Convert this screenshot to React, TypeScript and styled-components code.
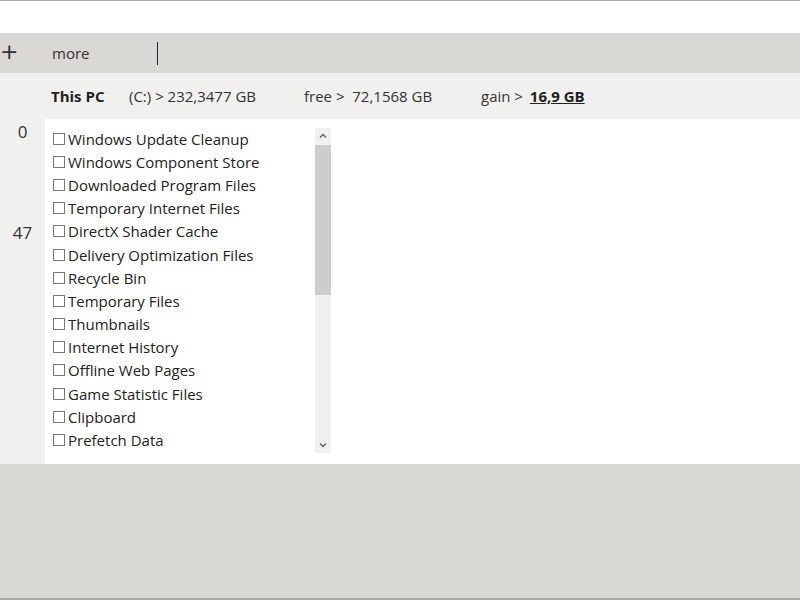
import styled, { createGlobalStyle } from "styled-components";

const GlobalStyle = createGlobalStyle`
  body {
    margin: 0;
    font-family: "Open Sans", "Noto Sans", sans-serif;
    color: #222;
  }
`;

const Frame = styled.div`
  height: 600px;
  display: flex;
  flex-direction: column;
  border-top: 1px solid #a8a8a8;
  border-bottom: 2px solid #a9a9a6;
  box-sizing: border-box;
  overflow: hidden;
`;

const TitleStrip = styled.div`
  height: 32px;
  background: #fff;
`;

const Toolbar = styled.div`
  height: 40px;
  background: #d9d8d4;
  display: flex;
  align-items: center;
  font-size: 15px;
  color: #333;
`;

const AddButton = styled.span`
  width: 52px;
  font-family: "DejaVu Sans", sans-serif;
  font-size: 22px;
  line-height: 1;
  padding-bottom: 2px;
  color: #333;
`;

const MoreLabel = styled.span`
  width: 105px;
`;

const Caret = styled.span`
  width: 1px;
  height: 23px;
  background: #222;
`;

const InfoRow = styled.div`
  height: 46px;
  background: #f0f0ef;
  display: flex;
  align-items: center;
  padding-left: 51px;
  font-size: 15px;
  color: #333;
`;

const InfoItem = styled.span<{ $w: number }>`
  width: ${(p) => p.$w}px;
  white-space: nowrap;
`;

const Strong = styled.b`
  font-weight: 700;
  color: #222;
`;

const Gain = styled.b`
  font-weight: 700;
  text-decoration: underline;
  color: #222;
  margin-left: 3px;
`;

const Main = styled.div`
  height: 345px;
  display: flex;
`;

const Gutter = styled.div`
  width: 45px;
  background: #f0f0ef;
  display: flex;
  flex-direction: column;
  align-items: center;
  font-size: 17px;
  color: #333;
  padding-top: 1px;
  box-sizing: border-box;
`;

const GutterNum = styled.span<{ $gap: number }>`
  margin-top: ${(p) => p.$gap}px;
  line-height: 22px;
`;

const Panel = styled.div`
  flex: 1;
  background: #fff;
  padding: 9px 0 0 5px;
  box-sizing: border-box;
`;

const ListBox = styled.div`
  width: 281px;
  height: 325px;
  display: flex;
`;

const List = styled.ul`
  flex: 1;
  list-style: none;
  margin: 0;
  padding: 0 0 0 3px;
`;

const Item = styled.li`
  height: 23.2px;
  display: flex;
  align-items: center;
  font-size: 15px;
  color: #222;
  white-space: nowrap;
  margin-top: -1px;
  margin-bottom: 1px;
`;

const Box = styled.span`
  width: 10px;
  height: 10px;
  border: 1px solid #777;
  margin-right: 3px;
  flex-shrink: 0;
`;

const ScrollBar = styled.div`
  width: 16px;
  background: #f0f0f0;
  display: flex;
  flex-direction: column;
  align-items: center;
`;

const Arrow = styled.svg`
  width: 16px;
  height: 17px;
  flex-shrink: 0;
`;

const Thumb = styled.div`
  width: 16px;
  height: 150px;
  background: #cdcdcd;
`;

const Spacer = styled.div`
  flex: 1;
`;

const Bottom = styled.div`
  flex: 1;
  background: #d8d7d3;
`;

const items = [
  "Windows Update Cleanup",
  "Windows Component Store",
  "Downloaded Program Files",
  "Temporary Internet Files",
  "DirectX Shader Cache",
  "Delivery Optimization Files",
  "Recycle Bin",
  "Temporary Files",
  "Thumbnails",
  "Internet History",
  "Offline Web Pages",
  "Game Statistic Files",
  "Clipboard",
  "Prefetch Data",
];

export default function App() {
  return (
    <>
      <GlobalStyle />
      <Frame>
        <TitleStrip />
        <Toolbar>
          <AddButton>+</AddButton>
          <MoreLabel>more</MoreLabel>
          <Caret />
        </Toolbar>
        <InfoRow>
          <InfoItem $w={78}>
            <Strong>This PC</Strong>
          </InfoItem>
          <InfoItem $w={175}>(C:) &gt; 232,3477 GB</InfoItem>
          <InfoItem $w={177}>free &gt;&nbsp;&nbsp;72,1568 GB</InfoItem>
          <InfoItem $w={150}>
            gain &gt; <Gain>16,9 GB</Gain>
          </InfoItem>
        </InfoRow>
        <Main>
          <Gutter>
            <GutterNum $gap={1}>0</GutterNum>
            <GutterNum $gap={79}>47</GutterNum>
          </Gutter>
          <Panel>
            <ListBox>
              <List>
                {items.map((it) => (
                  <Item key={it}>
                    <Box />
                    {it}
                  </Item>
                ))}
              </List>
              <ScrollBar>
                <Arrow viewBox="0 0 16 17">
                  <path d="M5 9.5 L8 6.5 L11 9.5" fill="none" stroke="#606060" strokeWidth="1.4" />
                </Arrow>
                <Thumb />
                <Spacer />
                <Arrow viewBox="0 0 16 17">
                  <path d="M5 7.5 L8 10.5 L11 7.5" fill="none" stroke="#606060" strokeWidth="1.4" />
                </Arrow>
              </ScrollBar>
            </ListBox>
          </Panel>
        </Main>
        <Bottom />
      </Frame>
    </>
  );
}
